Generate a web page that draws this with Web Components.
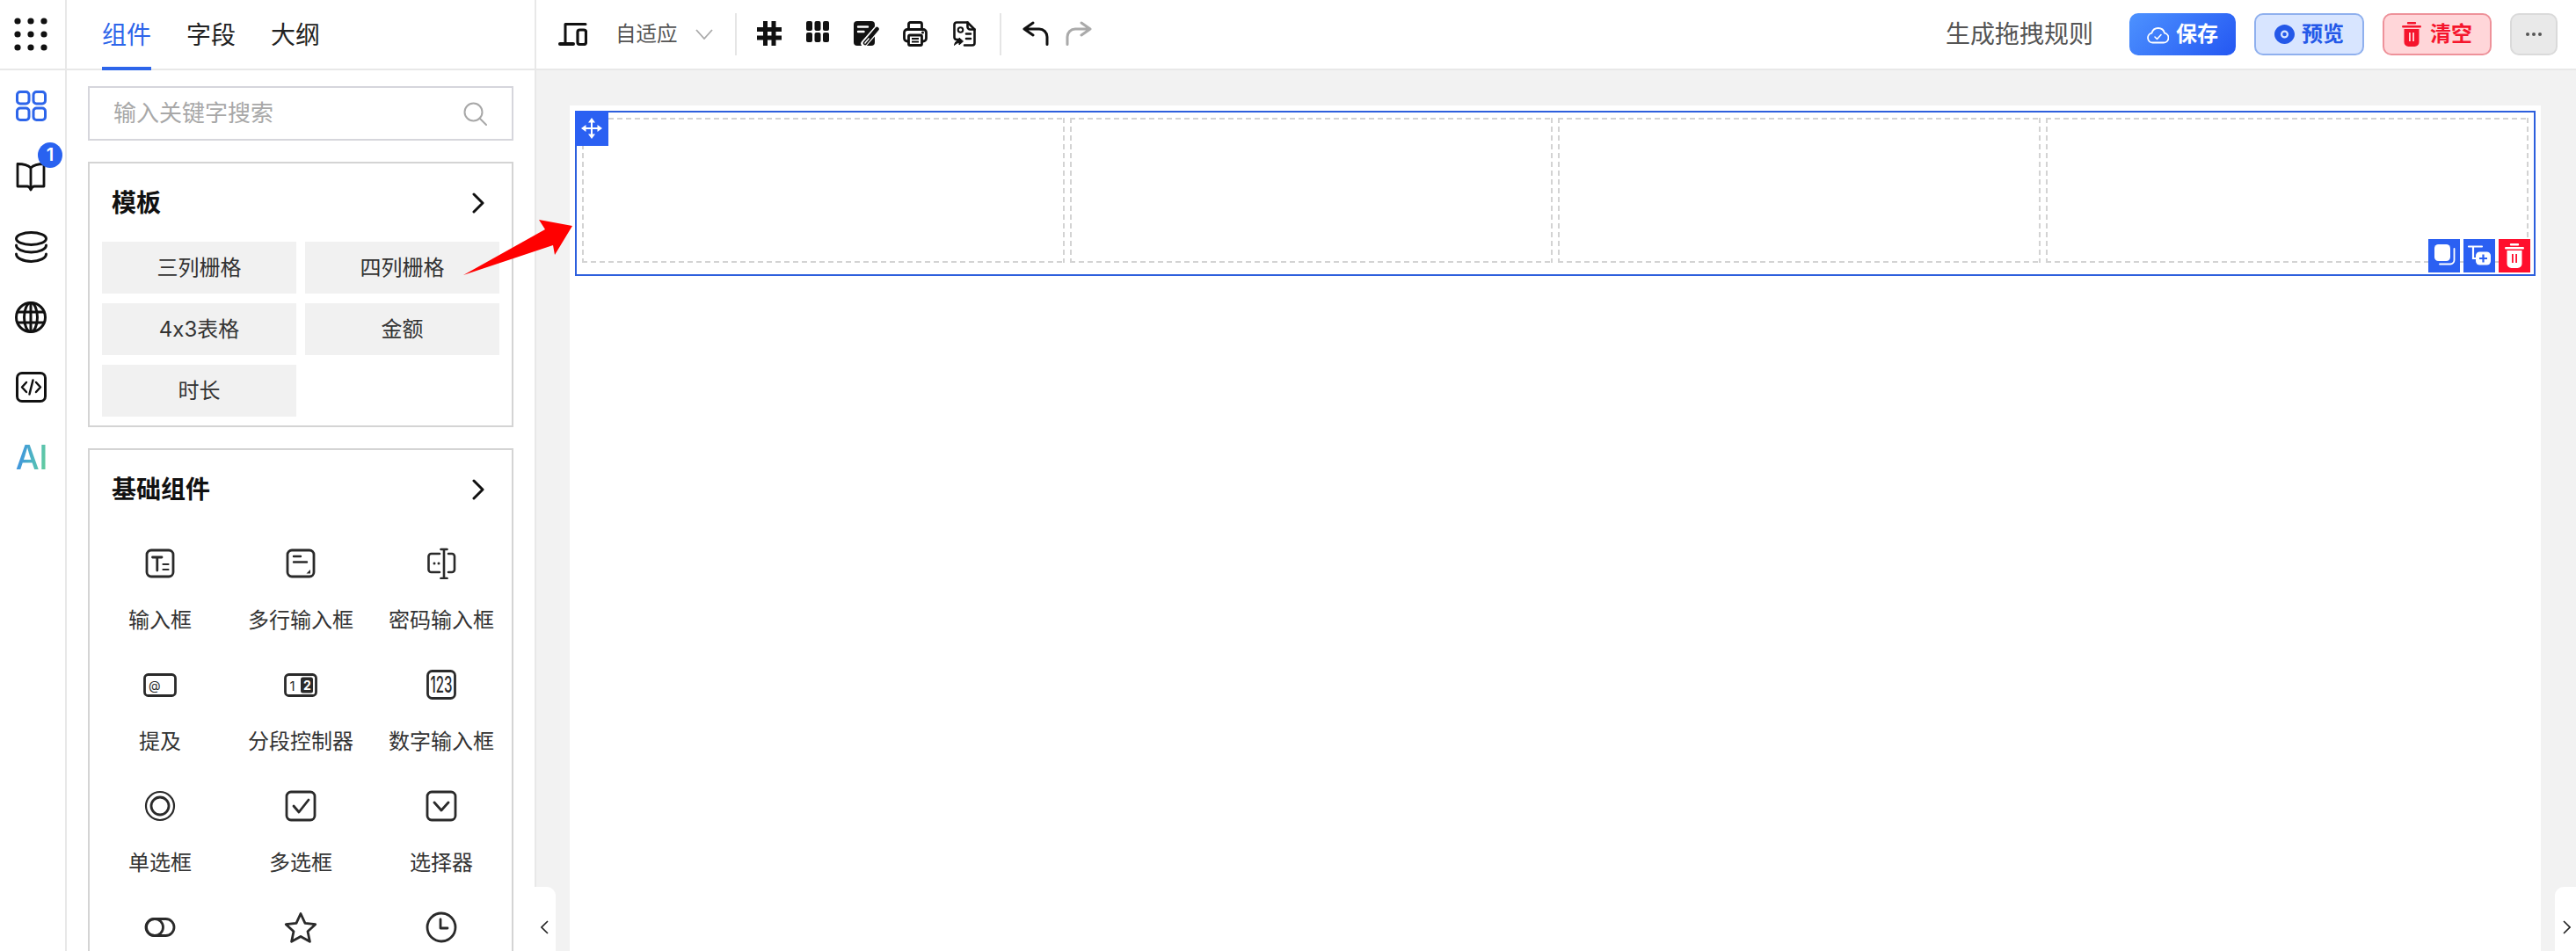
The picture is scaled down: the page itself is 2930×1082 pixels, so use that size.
<!DOCTYPE html>
<html lang="zh-CN">
<head>
<meta charset="utf-8">
<title>表单设计器</title>
<style>
  html, body { margin: 0; height: 100%; overflow: hidden; background: #fff; }
  body { font-family: Inter, "Noto Sans CJK SC", sans-serif; color: #222; font-feature-settings: "calt" 0; }
</style>
</head>
<body>
<fd-app></fd-app>
<script>
const ICONS = {
  dots: [44,44,`<g fill="#111">${[7,22,37].map(y=>[7,22,37].map(x=>`<circle cx="${x}" cy="${y}" r="3.6"/>`).join('')).join('')}</g>`],
  grid: [35,35,`<g fill="none" stroke="currentColor" stroke-width="3"><rect x="1.5" y="1.5" width="13.5" height="13.5" rx="3.5"/><rect x="20" y="1.5" width="13.5" height="13.5" rx="3.5"/><rect x="1.5" y="20" width="13.5" height="13.5" rx="3.5"/><rect x="20" y="20" width="13.5" height="13.5" rx="3.5"/></g>`],
  book: [34,33,`<path fill="none" stroke="currentColor" stroke-width="2.8" stroke-linejoin="round" d="M17 6C14 3 8 1.500 2 1.500V27h11c2 0 3.200 2 4 4 .8-2 2-4 4-4h11V1.500C26 1.500 20 3 17 6zM17 6v24"/>`],
  db: [37,36,`<g fill="none" stroke="currentColor" stroke-width="3" stroke-linecap="round"><ellipse cx="18.500" cy="8.500" rx="17" ry="7"/><path d="M1.500 16c0 4.500 7.500 8 17 8s17-3.500 17-8M1.500 26c0 4.500 7.500 8.500 17 8.500s17-4 17-8.500"/></g>`],
  globe: [36,36,`<g fill="none" stroke="currentColor" stroke-width="3"><circle cx="18" cy="18" r="16.500"/><ellipse cx="18" cy="18" rx="7.500" ry="16.500"/><path d="M18 1.500v33M2.500 12h31M2.500 24h31"/></g>`],
  code: [35,35,`<g fill="none" stroke="currentColor" stroke-width="3" stroke-linecap="round" stroke-linejoin="round"><rect x="1.500" y="1.500" width="32" height="32" rx="5.500"/><path d="M12 12l-5 5.500 5 5.500M23 12l5 5.500-5 5.500M19.500 9.500l-4 16" stroke-width="2.500"/></g>`],
  search: [27,27,`<g fill="none" stroke="#a8a8a8" stroke-width="2"><circle cx="11.500" cy="11.500" r="10"/><path d="M18.500 18.500l7.500 7.500" stroke-linecap="round"/></g>`],
  right: [14,24,`<path fill="none" stroke="#111" stroke-width="3" stroke-linecap="round" stroke-linejoin="round" d="M2 2l10 10L2 22"/>`],
  device: [33,26,`<g fill="none" stroke="#111" stroke-linecap="round"><path stroke-width="3" d="M8 1.500h23M8 1.500V24"/><path stroke-width="4" d="M2 24H17"/><rect x="22" y="8" width="9.500" height="16.500" rx="2.500" stroke-width="3.200"/></g>`],
  down: [20,12,`<path fill="none" stroke="#aaa" stroke-width="1.800" d="M1 1l9 10 9-10"/>`],
  hash: [28,28,`<path fill="none" stroke="#111" stroke-width="5" d="M9.500 0v28M19 0v28M0 9.500h28M0 19h28"/>`],
  cols: [26,24,`<g fill="#111"><rect width="7" height="11" rx="2"/><rect x="9.500" width="7" height="11" rx="2"/><rect x="19" width="7" height="11" rx="2"/><rect y="13" width="7" height="11" rx="2"/><rect x="9.500" y="13" width="7" height="11" rx="2"/><rect x="19" y="13" width="7" height="11" rx="2"/></g>`],
  note: [30,28,`<rect width="24" height="28" rx="4" fill="#111"/><path d="M5 6.500h11M5 12h6.500" stroke="#fff" stroke-width="2.400" stroke-linecap="round"/><path d="M12 25.500L26.500 9" stroke="#fff" stroke-width="7.500" stroke-linecap="round"/><path d="M13 25L26.500 9" stroke="#111" stroke-width="4.500" stroke-linecap="round"/><path d="M12.500 25.500l5-6" stroke="#fff" stroke-width="1.400"/>`],
  printer: [28,29,`<g fill="none" stroke="#111" stroke-width="2.800" stroke-linejoin="round"><path d="M6.500 9.500V3.500a2 2 0 0 1 2-2h11a2 2 0 0 1 2 2v6"/><path d="M6.500 23H5a3.500 3.500 0 0 1-3.500-3.500V13A3.500 3.500 0 0 1 5 9.500h18a3.500 3.500 0 0 1 3.500 3.500v6.500A3.500 3.500 0 0 1 23 23h-1.500"/><rect x="6.500" y="16" width="15" height="11.500" rx="1.500"/><path d="M10 20h8M10 23.500h8" stroke-width="1.800"/></g><circle cx="22.500" cy="13" r="1.500" fill="#111"/>`],
  report: [26,29,`<g fill="none" stroke="#111" stroke-width="2.600" stroke-linejoin="round" stroke-linecap="round"><path d="M6 21H4a2.500 2.500 0 0 1-2.500-2.500V4A2.500 2.500 0 0 1 4 1.500h12.500l8 8V25a2.500 2.500 0 0 1-2.500 2.500H13"/><path d="M16.500 1.500v5a3 3 0 0 0 3 3h5"/><circle cx="8.500" cy="10" r="2.800" stroke-width="2"/><path d="M15 14.500h5M15 20h5"/></g><path d="M1.500 27.500c.5-3.500 2.500-5.500 5.500-6v-2.500l4.500 4-4.500 4v-2.500c-2 .2-3.500 1-5.500 3z" fill="#111" stroke="#111"/>`],
  undo: [30,28,`<path fill="none" stroke="currentColor" stroke-width="3" stroke-linecap="round" stroke-linejoin="round" d="M12 2L2 9l10 7M2 9h17a9 9 0 0 1 9 9v8.500"/>`],
  redo: [30,28,`<path fill="none" stroke="currentColor" stroke-width="3" stroke-linecap="round" stroke-linejoin="round" d="M18 2l10 7-10 7M28 9H11a9 9 0 0 0-9 9v8.500"/>`],
  cloud: [25,24,`<path fill="none" stroke="currentColor" stroke-width="1.800" stroke-linejoin="round" d="M6.500 21.500a5.500 5.500 0 0 1-1-10.900 7.500 7.500 0 0 1 14.500 0 5.500 5.500 0 0 1-1 10.900z"/><path fill="none" stroke="currentColor" stroke-width="1.600" stroke-linecap="round" stroke-linejoin="round" d="M9 15l2.500 2.500 4.500-5"/>`],
  eye: [23,24,`<path fill="currentColor" fill-rule="evenodd" d="M11.500 1C17.500 1 23 6 23 12s-5.500 11-11.500 11S0 18 0 12 5.500 1 11.500 1zm0 6.500a4.500 4.500 0 1 0 0 9 4.500 4.500 0 0 0 0-9zm0 2.200a2.300 2.300 0 1 1 0 4.600 2.300 2.300 0 0 1 0-4.600z"/>`],
  trash: [22,28,`<path fill="currentColor" fill-rule="evenodd" d="M7 0h8a1.200 1.200 0 0 1 0 2.400H7A1.200 1.200 0 0 1 7 0zM1.200 4h19.600a1.200 1.200 0 0 1 0 2.400H1.200a1.200 1.200 0 0 1 0-2.400zM2.500 8h17v15a5 5 0 0 1-5 5h-7a5 5 0 0 1-5-5zM8 12v10h1.800V12zm4.200 0v10H14V12z"/>`],
  more: [20,6,`<g fill="#555"><circle cx="3" cy="3" r="2"/><circle cx="10" cy="3" r="2"/><circle cx="17" cy="3" r="2"/></g>`],
  move: [26,26,`<g fill="#fff"><path d="M13 1l4 5.500H9zM13 25l4-5.500H9zM1 13l5.500-4v8zM25 13l-5.500-4v8z"/></g><path d="M13 4v18M4 13h18" stroke="#fff" stroke-width="2"/>`],
  copy: [36,38,`<rect x="7" y="6" width="18" height="19" rx="4.500" fill="#fff"/><path fill="none" stroke="#fff" stroke-width="1.800" stroke-linecap="round" d="M29.500 11v13a4.500 4.500 0 0 1-4.500 4.500H13"/>`],
  addnode: [36,38,`<path fill="none" stroke="#fff" stroke-width="2.200" stroke-linecap="round" d="M6 8.500h15M11 8.500V22h4"/><rect x="14" y="14.500" width="17" height="15" rx="4.500" fill="#fff"/><path d="M22.500 17.500v9M18 22h9" stroke="#2b60f2" stroke-width="2.200"/>`],
  input: [36,36,`<g fill="none" stroke="currentColor" stroke-linecap="round"><rect x="3" y="3" width="30" height="30" rx="5" stroke-width="2.800"/><path d="M9.500 11h10.500M14.800 11v15" stroke-width="2.800"/><path d="M21.500 19h6M21.500 25h6" stroke-width="2.200"/></g>`],
  textarea: [36,36,`<g fill="none" stroke="currentColor" stroke-linecap="round"><rect x="3" y="3" width="30" height="30" rx="5" stroke-width="2.800"/><path d="M10 10h8M10 16.500h15" stroke-width="2.400"/></g><path d="M29 25v4.500h-4.500z" fill="currentColor"/>`],
  password: [36,36,`<g fill="none" stroke="currentColor" stroke-width="2.600" stroke-linecap="round"><path d="M16 7H6.500A3 3 0 0 0 3.500 10v15a3 3 0 0 0 3 3H16M26 7h4a3 3 0 0 1 3 3v15a3 3 0 0 1-3 3h-4M21 2v33M17.500 2h7M17.500 35h7"/></g><g fill="currentColor"><circle cx="10" cy="18" r="1.500"/><circle cx="15" cy="18" r="1.500"/></g>`],
  mention: [38,27,`<rect x="1.500" y="1.500" width="35" height="24" rx="4" fill="none" stroke="currentColor" stroke-width="2.800"/><text x="6" y="18.500" font-family="Inter, sans-serif" font-size="14" fill="currentColor">@</text>`],
  segment: [38,27,`<rect x="1.500" y="1.500" width="35" height="24" rx="4" fill="none" stroke="currentColor" stroke-width="2.800"/><text x="6.500" y="19.500" font-family="Inter, sans-serif" font-size="15" fill="currentColor">1</text><rect x="19" y="4.500" width="14" height="18" rx="2.500" fill="currentColor"/><text x="22" y="19" font-family="Inter, sans-serif" font-size="14" font-weight="700" fill="#fff">2</text>`],
  number: [36,36,`<rect x="2.500" y="2.500" width="31" height="31" rx="5" fill="none" stroke="currentColor" stroke-width="2.800"/><text transform="translate(18 27) scale(.6 1)" text-anchor="middle" font-family="Inter, sans-serif" font-size="25" font-weight="500" fill="currentColor">123</text>`],
  radio: [36,36,`<g fill="none" stroke="currentColor"><circle cx="18" cy="18" r="16" stroke-width="2.200"/><circle cx="18" cy="18" r="10" stroke-width="2.800"/></g>`],
  check: [36,36,`<g fill="none" stroke="currentColor" stroke-width="2.800" stroke-linejoin="round"><rect x="2" y="2" width="32" height="32" rx="5"/><path d="M10 18l6 7L27 11" stroke-linecap="round"/></g>`],
  select: [36,36,`<g fill="none" stroke="currentColor" stroke-width="2.800" stroke-linejoin="round"><rect x="2" y="2" width="32" height="32" rx="5"/><path d="M10 14l8 9 8-9" stroke-linecap="round"/></g>`],
  toggle: [36,24,`<g fill="none" stroke="currentColor" stroke-width="2.800"><rect x="2" y="2.500" width="32" height="19" rx="9.500"/><circle cx="12" cy="12" r="9.500"/></g>`],
  star: [38,36,`<path fill="none" stroke="currentColor" stroke-width="2.800" stroke-linejoin="round" d="M19 2.500l5 10.800 11.700 1.400-8.700 8 2.400 11.600L19 28.500 8.600 34.300 11 22.700l-8.700-8 11.700-1.400z"/>`],
  clock: [36,36,`<g fill="none" stroke="currentColor" stroke-width="2.800" stroke-linecap="round" stroke-linejoin="round"><circle cx="18" cy="18" r="16"/><path d="M17 9v10h8"/></g>`]
};

function def(tag, css, html) {
  customElements.define(tag, class extends HTMLElement {
    constructor() {
      super();
      const r = this.attachShadow({ mode: 'open' });
      r.innerHTML = `<style>${css}</style>${typeof html === 'function' ? html(this) : html}`;
    }
  });
}

customElements.define('ui-icon', class extends HTMLElement {
  connectedCallback() {
    if (this.shadowRoot) return;
    const r = this.attachShadow({ mode: 'open' });
    const [w, h, body] = ICONS[this.getAttribute('name')];
    r.innerHTML = `<style>:host{display:inline-flex;flex:none;line-height:0}</style><svg width="${w}" height="${h}" viewBox="0 0 ${w} ${h}" xmlns="http://www.w3.org/2000/svg">${body}</svg>`;
  }
});

def('fd-rail', `
  :host{display:flex;flex-direction:column;border-right:2px solid #e8e8e8;background:#fff}
  .top{height:78px;border-bottom:2px solid #e8e8e8;display:flex;align-items:center;justify-content:center;padding-right:4px}
  .top ui-icon{margin-right:1px}
  .item{height:80px;width:70px;box-sizing:border-box;display:flex;align-items:center;justify-content:center;position:relative;color:#111}
  .up{padding-bottom:2px}
  .list{padding-top:1px}
  .on{color:#2d65ea}
  .badge{position:absolute;left:43px;top:1px;width:28px;height:29px;border-radius:50%;background:#2962f0;color:#fff;font:600 20px/29px Inter,sans-serif;text-align:center}
  .ai{font:500 38px/40px Inter,sans-serif;color:#4aa6c9;background:linear-gradient(100deg,#3d8fe2 10%,#4fb7c0 55%,#62cb9f 90%);-webkit-background-clip:text;background-clip:text;-webkit-text-fill-color:transparent;letter-spacing:-.5px;margin-left:2px}
`, `
  <div class="top"><ui-icon name="dots"></ui-icon></div>
  <div class="list">
    <div class="item on up"><ui-icon name="grid"></ui-icon></div>
    <div class="item"><ui-icon name="book"></ui-icon><span class="badge">1</span></div>
    <div class="item"><ui-icon name="db"></ui-icon></div>
    <div class="item"><ui-icon name="globe"></ui-icon></div>
    <div class="item up"><ui-icon name="code"></ui-icon></div>
    <div class="item up"><span class="ai">AI</span></div>
  </div>
`);

def('fd-tabs', `
  :host{display:flex;gap:40px;height:80px;box-sizing:border-box;padding-left:40px;box-shadow:inset 0 -2px #e8e8e8}
  span{height:80px;box-sizing:border-box;border-bottom:4px solid transparent;font-size:28px;line-height:80px;color:#222}
  .on{color:#2d65ea;border-bottom-color:#2d65ea}
`, `<span class="on">组件</span><span>字段</span><span>大纲</span>`);

def('fd-search', `
  :host{display:flex;align-items:center;justify-content:space-between;height:62px;box-sizing:border-box;border:2px solid #d6d6dc;padding:0 28px 0 27px;background:#fff}
  span{font-size:26px;line-height:60px;color:#a8a8a8}
`, `<span>输入关键字搜索</span><ui-icon name="search"></ui-icon>`);

def('fd-card', `
  :host{display:block;border:2px solid #d4d4d4;background:#fff}
  .head{height:89px;box-sizing:border-box;display:flex;align-items:center;justify-content:space-between;padding:0 31px 0 25px}
  b{font-size:28px;font-weight:700;color:#111;line-height:40px}
`, c => `<div class="head"><b>${c.getAttribute('title')}</b><ui-icon name="right"></ui-icon></div><slot></slot>`);

def('fd-templates', `
  :host{display:grid;grid-template-columns:221px 221px;grid-auto-rows:59px;column-gap:10px;row-gap:11px;padding:0 14px 10px}
`, `<slot></slot>`);

def('fd-tpl', `
  :host{display:flex;align-items:center;justify-content:center;background:#f1f1f1;font-size:24px;color:#333;line-height:30px}
`, `<slot></slot>`);

def('fd-widgets', `
  :host{display:grid;grid-template-columns:repeat(3,160px);grid-auto-rows:138px;margin-top:-1px}
`, `<slot></slot>`);

def('fd-widget', `
  :host{display:block;text-align:center;color:#2a2a2a;padding-top:21px;box-sizing:border-box}
  .ic{height:40px;display:flex;align-items:center;justify-content:center}
  .lb{margin-top:30px;font-size:24px;line-height:30px;white-space:nowrap;color:#333}
`, c => `<div class="ic"><ui-icon name="${c.getAttribute('icon')}"></ui-icon></div><div class="lb"><slot></slot></div>`);

def('fd-panel', `
  :host{display:block;border-right:2px solid #e8e8e8;background:#fff;overflow:hidden}
  .body{padding:18px 24px 0;display:flex;flex-direction:column;gap:24px}
`, `
  <fd-tabs></fd-tabs>
  <div class="body">
    <fd-search></fd-search>
    <fd-card title="模板">
      <fd-templates>
        <fd-tpl>三列栅格</fd-tpl><fd-tpl>四列栅格</fd-tpl>
        <fd-tpl>4x3表格</fd-tpl><fd-tpl>金额</fd-tpl>
        <fd-tpl>时长</fd-tpl>
      </fd-templates>
    </fd-card>
    <fd-card title="基础组件">
      <fd-widgets>
        <fd-widget icon="input">输入框</fd-widget>
        <fd-widget icon="textarea">多行输入框</fd-widget>
        <fd-widget icon="password">密码输入框</fd-widget>
        <fd-widget icon="mention">提及</fd-widget>
        <fd-widget icon="segment">分段控制器</fd-widget>
        <fd-widget icon="number">数字输入框</fd-widget>
        <fd-widget icon="radio">单选框</fd-widget>
        <fd-widget icon="check">多选框</fd-widget>
        <fd-widget icon="select">选择器</fd-widget>
        <fd-widget icon="toggle"></fd-widget>
        <fd-widget icon="star"></fd-widget>
        <fd-widget icon="clock"></fd-widget>
      </fd-widgets>
    </fd-card>
  </div>
`);

def('fd-btn', `
  :host{display:inline-flex;align-items:center;justify-content:center;gap:8px;height:48px;box-sizing:border-box;border-radius:10px;font-size:24px;font-weight:600;line-height:30px;border:2px solid transparent;white-space:nowrap}
  :host([kind=save]){width:121px;background:linear-gradient(135deg,#4d92ff,#2457f2);color:#fff;border:0}
  :host([kind=view]){width:125px;background:#d8e5ff;border-color:#8fb0ee;color:#2458e8}
  :host([kind=clear]){width:124px;background:#ffd6d9;border-color:#ee929a;color:#f5152d;gap:10px}
  :host([kind=more]){width:54px;background:#e9e9e9;border-color:#dadada}
`, `<slot></slot>`);

def('fd-toolbar', `
  :host{display:flex;align-items:center;height:78px;border-bottom:2px solid #e8e8e8;background:#fff;padding:0 21px 0 25px}
  .txt{font-size:23.500px;color:#555;line-height:30px;margin-left:32px;white-space:nowrap}
  .dn{margin-left:20px}
  .sep{width:2px;height:48px;background:#e5e5e5;margin:0 24px 0 25px}
  .tools{display:flex;gap:25.600px;margin:0 0 2px -2px}
  .tool{width:30px;display:flex;justify-content:center;color:#111}
  .hist{display:flex;gap:19px;color:#111;margin-bottom:2px}
  .off{color:#aaa}
  .right{margin-left:auto;display:flex;align-items:center;gap:21px}
  .gen{font-size:28px;color:#555;margin-right:20px;line-height:40px;white-space:nowrap}
`, `
  <ui-icon name="device"></ui-icon>
  <span class="txt">自适应</span>
  <ui-icon class="dn" name="down"></ui-icon>
  <span class="sep"></span>
  <div class="tools">
    <span class="tool"><ui-icon name="hash"></ui-icon></span>
    <span class="tool"><ui-icon name="cols"></ui-icon></span>
    <span class="tool"><ui-icon name="note"></ui-icon></span>
    <span class="tool"><ui-icon name="printer"></ui-icon></span>
    <span class="tool"><ui-icon name="report"></ui-icon></span>
  </div>
  <span class="sep"></span>
  <div class="hist"><ui-icon name="undo"></ui-icon><ui-icon class="off" name="redo"></ui-icon></div>
  <div class="right">
    <span class="gen">生成拖拽规则</span>
    <fd-btn kind="save"><ui-icon name="cloud"></ui-icon>保存</fd-btn>
    <fd-btn kind="view"><ui-icon name="eye"></ui-icon>预览</fd-btn>
    <fd-btn kind="clear"><ui-icon name="trash"></ui-icon>清空</fd-btn>
    <fd-btn kind="more"><ui-icon name="more"></ui-icon></fd-btn>
  </div>
`);

def('fd-row', `
  :host{display:grid;grid-template-columns:repeat(4,1fr);gap:6px;position:relative;border:2px solid #2d5fdd;padding:6px 6px 13px}
  .cell{height:165px;box-sizing:border-box;background:
    repeating-linear-gradient(90deg,#d3d3d3 0 6px,transparent 6px 10px) left top/100% 2px no-repeat,
    repeating-linear-gradient(90deg,#d3d3d3 0 6px,transparent 6px 10px) left bottom/100% 2px no-repeat,
    repeating-linear-gradient(180deg,#d3d3d3 0 6px,transparent 6px 10px) left top/2px 100% no-repeat,
    repeating-linear-gradient(180deg,#d3d3d3 0 6px,transparent 6px 10px) right top/2px 100% no-repeat}
  .drag{position:absolute;left:-2px;top:-2px;width:38px;height:40px;background:#2b60f2;display:flex;align-items:center;justify-content:center}
  .acts{position:absolute;right:4px;bottom:2px;display:flex;gap:4px}
  .act{width:36px;height:38px;background:#2b60f2;line-height:0}
  .del{background:#ff0f2d;color:#fff;display:flex;align-items:center;justify-content:center}
`, `
  <div class="cell"></div><div class="cell"></div><div class="cell"></div><div class="cell"></div>
  <div class="drag"><ui-icon name="move"></ui-icon></div>
  <div class="acts">
    <div class="act"><ui-icon name="copy"></ui-icon></div>
    <div class="act"><ui-icon name="addnode"></ui-icon></div>
    <div class="act del"><ui-icon name="trash"></ui-icon></div>
  </div>
`);

def('fd-canvas', `
  :host{display:block;flex:1;min-height:0;background:#f2f2f2;padding:40px 40px 0 38px;position:relative}
  .page{height:100%;box-sizing:border-box;background:#fff;padding:6px}
  .h{position:absolute;bottom:0;height:73px;width:24px;background:#fff;display:flex;align-items:center;justify-content:center;padding-top:18px;box-sizing:border-box}
  .l{left:-2px;border-top-right-radius:10px;padding-right:2px}
  .r{right:0;border-top-left-radius:10px;padding-left:2px}
  svg{display:block}
`, `
  <div class="page"><fd-row></fd-row></div>
  <div class="h l"><svg width="9" height="16" viewBox="0 0 9 16"><path d="M8 1L1 8l7 7" fill="none" stroke="#222" stroke-width="1.600"/></svg></div>
  <div class="h r"><svg width="9" height="16" viewBox="0 0 9 16"><path d="M1 1l7 7-7 7" fill="none" stroke="#222" stroke-width="1.600"/></svg></div>
`);

def('fd-main', `:host{display:flex;flex-direction:column;min-width:0;height:100%}`, `<fd-toolbar></fd-toolbar><fd-canvas></fd-canvas>`);

def('fd-app', `
  :host{display:grid;grid-template-columns:76px 534px 1fr;height:100vh;overflow:hidden;position:relative;background:#fff}
  .arrow{position:absolute;left:527px;top:250px}
`, `
  <fd-rail></fd-rail>
  <fd-panel></fd-panel>
  <fd-main></fd-main>
  <svg class="arrow" width="125" height="64" viewBox="0 0 125 64"><polygon fill="#f00" points="0,63 93,11 86,0 124,7 104,40 102,29"/></svg>
`);
</script>
</body>
</html>
